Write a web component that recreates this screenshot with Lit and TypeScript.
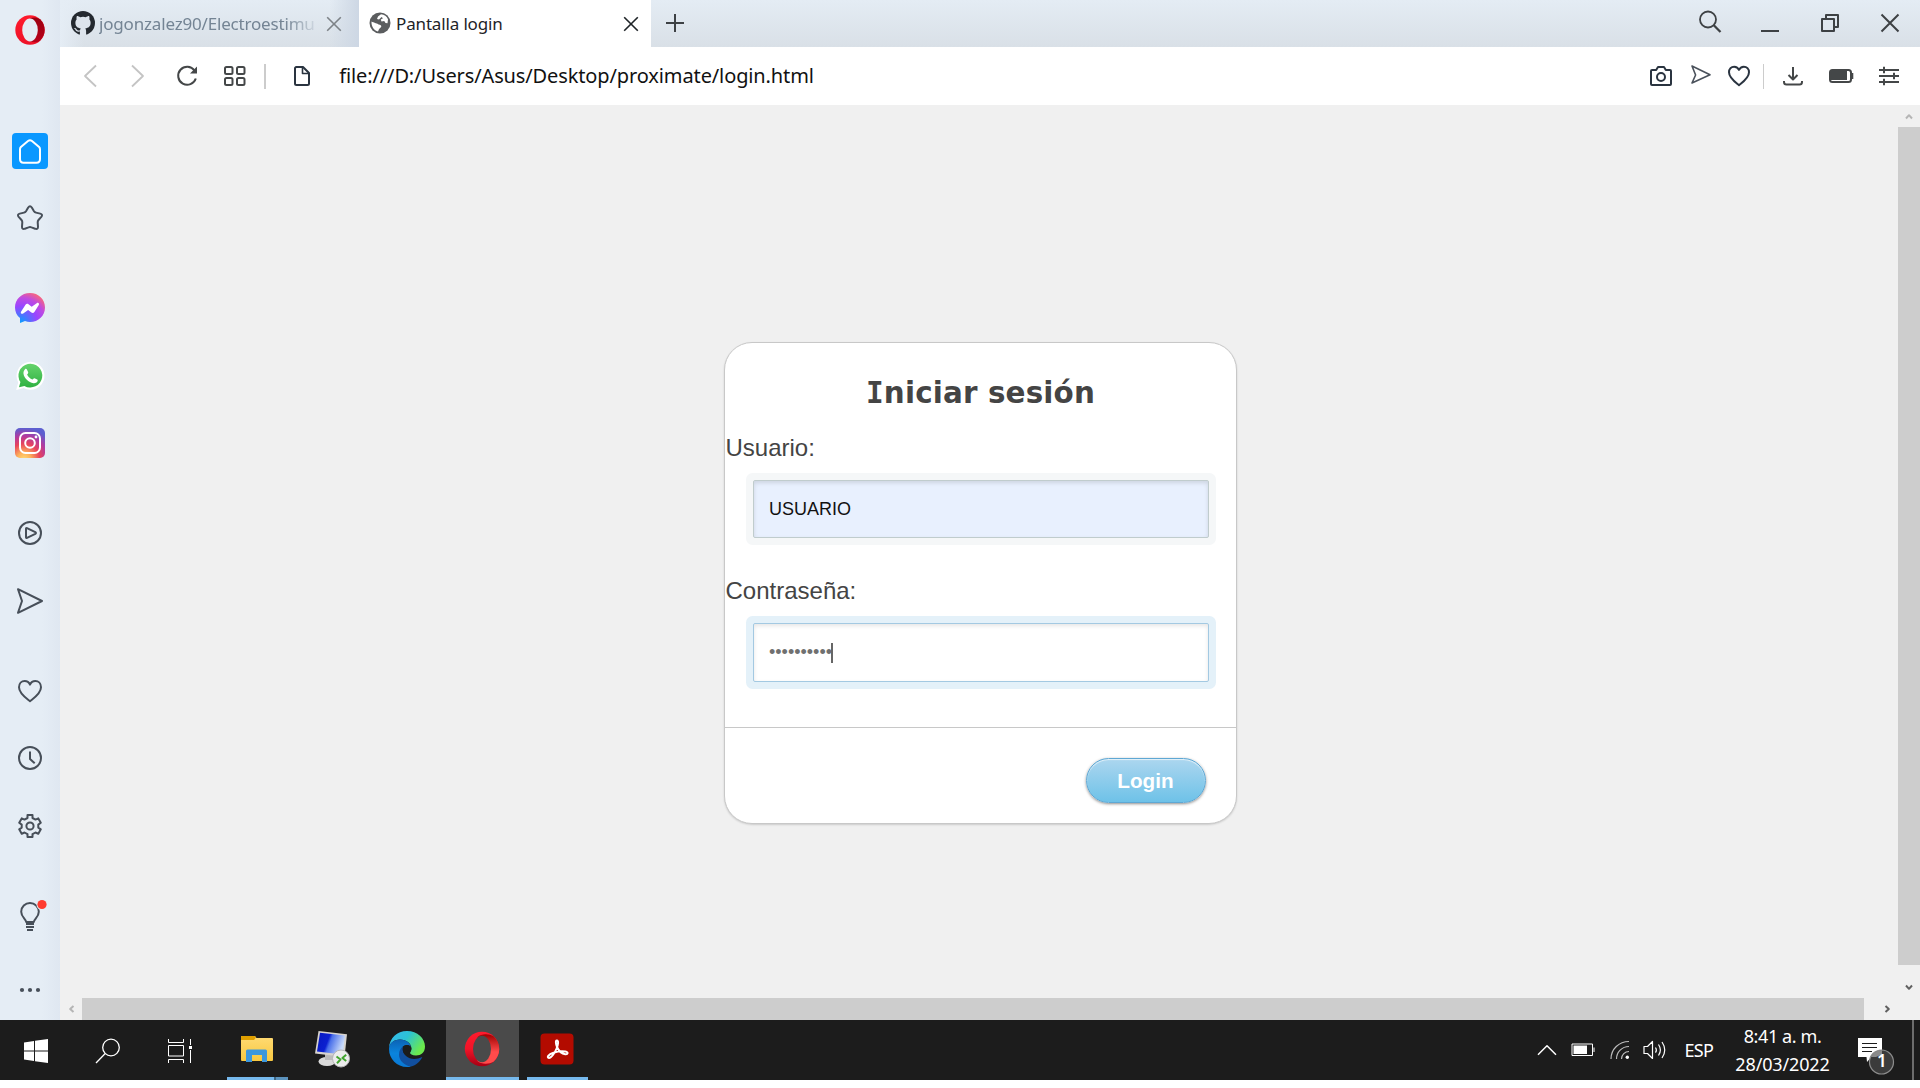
import { LitElement, html, svg, css, nothing } from "lit";
import type { TemplateResult } from "lit";
import { customElement, property } from "lit/decorators.js";

type Glyph = { w: number; h: number; body: TemplateResult };
const g = (w: number, h: number, body: TemplateResult): Glyph => ({ w, h, body });

const heart = svg`<path d="M12 21.2C8.500 18.400 2 14 2 8.300 2 5 4.300 2.700 7.200 2.700c2.100 0 3.800 1 4.800 3.200 1-2.200 2.700-3.200 4.800-3.200C19.700 2.700 22 5 22 8.300c0 5.700-6.500 10.100-10 12.900z"/>`;
const heartBig = svg`<path d="M13 23.300C9.200 20.300 2 15.500 2 9.300 2 5.500 4.600 3 7.700 3c2.300 0 4.200 1.100 5.300 3.600C14.100 4.100 16 3 18.300 3 21.400 3 24 5.500 24 9.300c0 6.200-7.200 11-11 14z"/>`;

const glyphs: Record<string, Glyph> = {
  opera: g(30, 30, svg`
    <defs><linearGradient id="o1" x1="0" y1="0" x2="0" y2="1"><stop offset="0" stop-color="#ff1b2d"/><stop offset="1" stop-color="#ee1228"/></linearGradient>
    <linearGradient id="o2" x1="0" y1="0" x2="0" y2="1"><stop offset="0" stop-color="#9c0010"/><stop offset="1" stop-color="#b8001a"/></linearGradient></defs>
    <circle cx="15" cy="15" r="14.700" fill="url(#o1)"/>
    <path d="M15 3.600C18 1.900 22 2.500 25 4.300a14.700 14.700 0 0 1 0 21.400c-3 1.800-7 2.200-10 .600z" fill="url(#o2)"/>
    <ellipse cx="15" cy="15" rx="7.800" ry="11.400" fill="#e4ecf4"/>`),
  operaTask: g(36, 36, svg`
    <defs><linearGradient id="p1" x1="0" y1="0" x2="0" y2="1"><stop offset="0" stop-color="#ff1b2d"/><stop offset=".5" stop-color="#f01428"/><stop offset="1" stop-color="#a50014"/></linearGradient>
    <linearGradient id="p2" x1="0" y1="0" x2="0" y2="1"><stop offset="0" stop-color="#9c0000"/><stop offset=".6" stop-color="#ff4b4b"/></linearGradient></defs>
    <circle cx="18" cy="18" r="17.200" fill="url(#p1)"/>
    <path d="M13.500 6C17 2.500 25 2.300 29.500 5.200a17.200 17.200 0 0 1 0 25.600C25 33.600 17 33.500 13.500 30z" fill="url(#p2)"/>
    <ellipse cx="18" cy="18" rx="9" ry="13.200" fill="#4a4a4a"/>`),
  github: g(24, 24, svg`<circle cx="12" cy="12" r="12" fill="#24292f"/><path fill="#dde4ec" d="M8.900 24v-3.400c-3.200.6-4-.9-4.500-1.900-.3-.6-.9-1.300-1.600-1.500.9-.6 2.100 0 2.700 1 .8 1.200 1.900 1.500 3.500 1.100.1-.9.400-1.500.8-1.900-3.400-.4-5.400-1.800-5.400-5.600 0-1.500.5-2.600 1.300-3.500-.3-.9-.3-2.200.2-3.400 1.200 0 2.400.7 3.300 1.300a12 12 0 0 1 5.600 0c.9-.6 2.100-1.300 3.300-1.300.5 1.200.5 2.500.2 3.400.8.9 1.300 2 1.300 3.500 0 3.800-2 5.200-5.400 5.600.6.6.9 1.400.9 2.500V24z"/>`),
  globe: g(22, 22, svg`<circle cx="11" cy="11" r="10.500" fill="#5b5d5f"/><path fill="#fff" d="M2.500 9.500C3.500 10.500 5 10 6 11l2.500.8c1.200 1.200 3.500.7 3.800 2.200.2 1.500-1.800 2-2.300 3.300l-1 2.200C5 18.600 2.200 14.500 2.500 9.500zM9 4.500l3-2.200c3.500.3 5.800 2.200 7 5l-.5 4-2-.2-1.300-2-2.700.3-.7-1.800L14 6.200 12.500 5 10 7.500 8 7z"/>`),
  closeThin: g(16, 16, svg`<path d="M1.200 1.200l13.600 13.600M14.800 1.200L1.200 14.800"/>`),
  plus: g(18, 18, svg`<path d="M9 0v18M0 9h18"/>`),
  search: g(24, 24, svg`<circle cx="10" cy="9.500" r="8"/><path d="M15.800 15.300l6.700 6.700" stroke-width="2.300"/>`),
  minimize: g(18, 18, svg`<path d="M0 17h18"/>`),
  restore: g(18, 18, svg`<path d="M1 5h12v12H1zM5 5V1h12v12h-4"/>`),
  close: g(18, 18, svg`<path d="M.5.500l17 17M17.500.500l-17 17"/>`),
  back: g(14, 24, svg`<path d="M13 1.500L2 12l11 10.500"/>`),
  forward: g(14, 24, svg`<path d="M1 1.500L12 12 1 22.500"/>`),
  reload: g(22, 22, svg`<path d="M18.500 5.500A9 9 0 1 0 19.800 13.500"/><path d="M21 1.500v7h-7z" fill="currentColor" stroke="none"/>`),
  tiles: g(24, 22, svg`<rect x="2" y="2" width="7.500" height="7" rx="1.500"/><rect x="14" y="2" width="7.500" height="7" rx="1.500"/><rect x="2" y="13" width="7.500" height="7" rx="1.500"/><rect x="14" y="13" width="7.500" height="7" rx="1.500"/>`),
  doc: g(18, 22, svg`<path d="M3 2h7l6 6v10.500q0 1.500-1.500 1.500h-11Q2 20 2 18.500V3.500Q2 2 3.500 2z"/><path d="M9.500 2v6.500H16" stroke-width="1.600"/>`),
  camera: g(24, 22, svg`<path d="M2 6q0-1 1-1h4.200L9 2h6l1.800 3H21q1 0 1 1v13q0 1-1 1H3q-1 0-1-1z"/><circle cx="12" cy="12" r="4"/>`),
  send: g(22, 22, svg`<path d="M2 2l18 8.800L2 19l3.600-8z"/>`),
  heart: g(24, 24, heart),
  heartBig: g(26, 26, heartBig),
  download: g(22, 22, svg`<path d="M11 2v12M6.500 10l4.500 4.500 4.500-4.500M2 16v1q0 2.500 2.500 2.500h13Q20 19.500 20 17v-1"/>`),
  battery: g(26, 18, svg`<path d="M4.500 3H20.500q2.500 0 2.500 2.500v7q0 2.500-2.500 2.500h-16Q2 15 2 12.500v-7Q2 3 4.500 3z"/><path d="M3 3h16v10H3z" fill="currentColor" stroke="none"/><path d="M24.300 6v6"/>`),
  sliders: g(22, 20, svg`<path d="M1 4h20M1 10h20M1 16h20M6 .8v6.400M16 6.800v6.400M6 12.800v6.400"/>`),
  home: g(36, 36, svg`<rect width="36" height="36" rx="4" fill="#0a98ff" stroke="none"/><path d="M8 16.200q0-1.300.9-2.200L16 8q2-1.400 4 0l7.100 6q.9.900.9 2.200V26q0 3.800-3.500 3.800h-13Q8 29.800 8 26z" stroke="#fff"/>`),
  star: g(30, 28, svg`<path d="M13.200 3.500q1.800-2.500 3.600 0l2.200 3.700q.7 1.100 2 1.400l4.200 1q3 .8 1.100 3.200L23.500 16q-.9 1-.8 2.400l.3 4.300q0 3.200-2.900 2l-3.600-1.300q-1.500-.6-3 0l-3.600 1.300q-2.900 1.200-2.900-2l.3-4.300q.1-1.400-.8-2.400l-2.800-3.200Q1.800 10.400 4.800 9.600l4.200-1q1.300-.3 2-1.400z"/>`),
  messenger: g(30, 30, svg`<defs><radialGradient id="ms" cx=".2" cy=".98" r="1.100"><stop offset="0" stop-color="#0a9cff"/><stop offset=".5" stop-color="#9a45ff"/><stop offset=".75" stop-color="#c04be0"/><stop offset="1" stop-color="#ff6b70"/></radialGradient></defs><path d="M15 0C6.500 0 0 6.200 0 14.500c0 4.300 1.800 8 5 10.600V30l5-2c1.600.7 3.300 1 5 1 8.500 0 15-6.200 15-14.500S23.500 0 15 0z" fill="url(#ms)"/><path fill="#fff" d="M6 18.800l4.500-7c.7-1.100 2-1.300 3-.5l3.200 2.500 5-3.600c1.300-1 3 .3 2.100 1.700l-4.400 7c-.7 1.100-2 1.300-3 .5l-3.300-2.500-4.900 3.600c-1.400 1-3-.3-2.200-1.700z"/>`),
  whatsapp: g(30, 30, svg`<defs><linearGradient id="wa" x1="0" y1="0" x2="0" y2="1"><stop offset="0" stop-color="#65d36b"/><stop offset="1" stop-color="#30b143"/></linearGradient></defs><path d="M1.200 29l2-7.500A14 14 0 1 1 8.600 27z" fill="#fff"/><path d="M4 26.200l1.400-5.100a11.900 11.900 0 1 1 4 3.800z" fill="url(#wa)"/><path d="M10 8.200c.6-.6 1.500-.5 1.900.2l1.300 2.900c.2.700-.4 1.600-1.100 2.200 1.200 2.400 2.900 4 5.300 5.100.8-.6 1.300-1.700 2.100-1.400l2.700 1.400c.7.4.6 1.100.2 1.900-.7 1.300-2.500 1.900-3.900 1.700-5.100-.8-9.300-5.100-10-9.500-.2-1.900.4-3.400 1.500-4.500z" fill="#fff"/>`),
  instagram: g(30, 30, svg`<defs><radialGradient id="ig" cx=".3" cy="1.050" r="1.050"><stop offset="0" stop-color="#ffdc72"/><stop offset=".22" stop-color="#fdb05a"/><stop offset=".5" stop-color="#e8445b"/><stop offset=".75" stop-color="#b23aa0"/><stop offset="1" stop-color="#5c5fd0"/></radialGradient></defs><rect width="30" height="30" rx="5" fill="url(#ig)" stroke="none"/><rect x="5" y="5" width="20" height="20" rx="5.500" stroke="#fff"/><circle cx="15" cy="15" r="4.800" stroke="#fff"/><circle cx="21" cy="9" r="1.400" fill="#fff" stroke="none"/>`),
  player: g(26, 26, svg`<circle cx="13" cy="13" r="11"/><path d="M9 8.800q0-1 1-.6l8.300 4q1.300.8 0 1.600L10 17.800q-1 .4-1-.6z"/>`),
  sendBig: g(28, 28, svg`<path d="M2 2.200L26 14 2 25.800 6 14z"/>`),
  clock: g(26, 26, svg`<circle cx="13" cy="13" r="11"/><path d="M13 6.500V14l4.700 4.300"/>`),
  gear: g(26, 26, svg`<path d="M10.500 2h5v3l3 1.600 2.800-1.200 2.500 4.300-2.500 1.900v3l2.500 1.700-2.500 4.500-2.800-1.300-3 1.700v2.900h-5v-2.900l-3-1.700-2.800 1.300-2.500-4.500 2.500-1.700v-3L2.200 9.700l2.500-4.300 2.800 1.200 3-1.600z"/><circle cx="13" cy="13" r="3.600"/>`),
  bulb: g(34, 32, svg`<path d="M13.200 22c0-3-5-4.600-5-10.300A8.800 8.800 0 0 1 17 3a8.800 8.800 0 0 1 8.800 8.700c0 5.700-5 7.300-5 10.300z"/><path d="M13 24h8M13 27h8M14 30h6"/><circle cx="29" cy="4.500" r="5.500" fill="#e4ecf4" stroke="none"/><circle cx="29" cy="4.500" r="4.600" fill="#ff3b2f" stroke="none"/>`),
  more: g(22, 6, svg`<circle cx="3" cy="3" r="2.100" fill="currentColor"/><circle cx="11" cy="3" r="2.100" fill="currentColor"/><circle cx="19" cy="3" r="2.100" fill="currentColor"/>`),
  windows: g(24, 24, svg`<path fill="#fff" d="M0 3.400L10 2v9.500H0zM11 1.800L24 0v11.500H11zM0 12.500h10V22L0 20.600zM11 12.500h13V24l-13-1.800z"/>`),
  find: g(26, 26, svg`<circle cx="16" cy="9.500" r="8.300"/><path d="M10.200 15.500L1 25"/>`),
  taskview: g(26, 24, svg`<path d="M1.500 0v3.500h15V0M1.500 24v-3.500h15V24M1.500 6.500h15v10.500h-15zM23.500 0v6M23.500 11v13"/><rect x="22" y="7" width="3" height="3" fill="#fff" stroke="none"/>`),
  explorer: g(34, 28, svg`<defs><linearGradient id="fo" x1="0" y1="0" x2="0" y2="1"><stop offset="0" stop-color="#ffdb74"/><stop offset="1" stop-color="#f8c840"/></linearGradient></defs><path d="M1 2q0-1 1-1h13l1.500 2H32q1 0 1 1v21q0 1-1 1H2q-1 0-1-1z" fill="url(#fo)"/><path d="M1 2q0-1 1-1h12.500l1.500 1.500L14 5H1z" fill="#e0a000"/><path d="M6 27V16q0-1.500 1.500-1.500h18Q27 14.500 27 16v11h-5v-7H12v7z" fill="#3c97dd"/>`),
  remote: g(38, 38, svg`<defs><linearGradient id="sc" x1="0" y1="0" x2="1" y2=".3"><stop offset="0" stop-color="#0718c0"/><stop offset=".45" stop-color="#0b20d0"/><stop offset=".55" stop-color="#4a70ea"/><stop offset="1" stop-color="#c8dafa"/></linearGradient></defs><g stroke="none"><ellipse cx="14" cy="31.500" rx="8.500" ry="4.500" fill="#d9d9d9"/><path d="M12 22h8v8h-8z" fill="#bbb"/><path d="M5.500 1L34 4.200 31.500 27 2 23.500z" fill="#d7d3ce"/><path d="M7 2.700l25 2.900L29.700 24.500 4 21.500z" fill="url(#sc)"/></g><circle cx="28" cy="28.500" r="8.500" fill="#ececec" stroke="#b5b5b5"/><path d="M23.500 26.500l4 3-3.500 3.700M33.200 24.800l-3.800 3.200 3.800 3" stroke="#43a52f" stroke-width="2"/>`),
  edge: g(36, 36, svg`<defs><linearGradient id="e1" x1="0" y1="0" x2="1" y2=".5"><stop offset="0" stop-color="#35b8f2"/><stop offset=".5" stop-color="#2cc3d4"/><stop offset="1" stop-color="#6bea4c"/></linearGradient><linearGradient id="e2" x1="0" y1="0" x2="0" y2="1"><stop offset="0" stop-color="#0c62b4"/><stop offset=".5" stop-color="#0a84dd"/><stop offset="1" stop-color="#0a78d4"/></linearGradient></defs><path d="M0 17C.5 7 8 0 18 0c10.500 0 18 7.500 18 15.500 0 6-4 9-9 9-4 0-6-1.400-6-2.700 0-1.200 1.400-1.600 1.400-4.300C22.400 12 17 8.500 11 8.500 5 8.500 1 12 0 17z" fill="url(#e1)"/><path d="M0 18C0 12 5 8.500 11 8.500c6.400 0 11 4 11 8.200-.7-2.200-2.700-3-4.700-2.700C13 14.600 11 19 11.600 23.500c.8 6 4.800 10.400 10.400 11.900-1.200.5-2.600.6-4 .6C8 36 0 28 0 18z" fill="url(#e2)"/><path d="M14.500 15.300C13 18 13.700 22 17 25c4 3.500 10 4 16.300 1-2.100 4.500-6.300 8.600-11.300 9.400C15 34.500 10 29.500 10 23.500c0-3.800 1.800-6.700 4.500-8.200z" fill="#114f9f"/><path d="M14.500 15.300C13.300 17.500 13.500 20.500 15.500 23.300c2-.1 4.500-.5 5.800-1-.5-1.500 1.100-1.900 1.100-4.800 0-2.500-2.600-3.900-5.100-3.500-1.200.2-2.100.700-2.800 1.300z" fill="#1c1c1c"/>`),
  acrobat: g(34, 32, svg`<rect x=".5" y=".5" width="33" height="31" rx="4" fill="#b30b00" stroke="none"/><path d="M16.800 7.500c2.200 0 1.200 4.500-.2 8C15 19.500 11.500 25 9 25c-2.500-.3-1-3.600 4.500-5.300 3.500-1.100 8.500-1.700 11.800-1.200 3.500.8 2.500 3.200-.1 2.800-3.500-.5-6.700-4-8.200-7.300-1.100-2.800-1.700-6.500-.2-6.500z" stroke="#fff" stroke-width="2"/>`),
  chevronUp: g(20, 12, svg`<path d="M1 10.700l9-9 9 9"/>`),
  power: g(24, 14, svg`<path d="M1 1h20.500v11.500H1zM23 4.500v4.500"/><path d="M2.500 2.500H16v8.500H2.500z" fill="#fff" stroke="none"/>`),
  wifi: g(20, 20, svg`<path d="M1 19C1 9 9 1.500 19 1.500M6.500 19C6.500 12 12 6.500 19 6.500M11.500 19c0-4.500 3.500-7.500 7.500-7.500" stroke="#bdbdbd"/><circle cx="17.300" cy="17.300" r="1.700" fill="#fff" stroke="none"/>`),
  volume: g(24, 20, svg`<path d="M1 6.500h3.500L9.500 1.500v17l-5-5H1zM12.500 7.500q1.800 2.500 0 5.200M15.500 4.500q3.800 5.500 0 11M19 2q5.500 8 0 16"/>`),
  notice: g(38, 40, svg`<path d="M1 1h24v19H14.500L10 25l-.5-5H1z" fill="#fff" stroke="none"/><path d="M5 6.500h15M5 10.500h15M5 14.500h10" stroke="#1c1c1c"/><circle cx="24.500" cy="25" r="12" fill="#3b3b3b" stroke="#8d8d8d"/><path d="M13.800 20L15 18.500q3.500-5.500 10-5.500v4.500L19 20z" fill="#8a8a8a" stroke="none"/>`),
  arrowUp: g(8, 7, svg`<path d="M1 5.500l3-3.300 3 3.300"/>`),
  arrowDown: g(8, 7, svg`<path d="M1 1.500l3 3.300 3-3.300"/>`),
  arrowLeft: g(7, 8, svg`<path d="M5.500 1L2.200 4l3.300 3"/>`),
  arrowRight: g(7, 8, svg`<path d="M1.500 1l3.300 3-3.300 3"/>`),
};

const filled = new Set(["opera", "operaTask", "github", "globe", "messenger", "whatsapp", "more", "windows", "explorer", "edge"]);

@customElement("ui-icon")
export class UiIcon extends LitElement {
  @property() name = "";
  @property({ type: Number }) weight = 2;
  static styles = css`
    :host { display: block; flex: none; }
    svg { display: block; overflow: visible; }
  `;
  render() {
    const i = glyphs[this.name];
    if (!i) return nothing;
    return html`<svg width=${i.w} height=${i.h} viewBox="0 0 ${i.w} ${i.h}" fill="none"
      stroke=${filled.has(this.name) ? "none" : "currentColor"}
      stroke-width=${this.weight} stroke-linejoin="round">${i.body}</svg>`;
  }
}

@customElement("side-bar")
export class SideBar extends LitElement {
  static styles = css`
    :host { display: flex; flex-direction: column; align-items: center; box-sizing: border-box; width: 60px; padding-top: 15px; background: linear-gradient(90deg, #e5edf5 70%, #dfe7f1); color: #474f59; }
    .items { padding-top: 72px; }
    .group { display: flex; flex-direction: column; margin-bottom: 22.500px; }
    .item { height: 67.500px; display: flex; align-items: center; justify-content: center; }
    .more { padding-top: 14.750px; }
  `;
  render() {
    const groups = [["home", "star"], ["messenger", "whatsapp", "instagram"], ["player", "sendBig"], ["heartBig", "clock", "gear"], ["bulb"]];
    return html`<ui-icon name="opera"></ui-icon>
      <div class="items">${groups.map((x) => html`<div class="group">${x.map((n) => html`<div class="item"><ui-icon name=${n}></ui-icon></div>`)}</div>`)}</div>
      <ui-icon class="more" name="more"></ui-icon>`;
  }
}

@customElement("tab-strip")
export class TabStrip extends LitElement {
  static styles = css`
    :host { display: flex; height: 47px; background: linear-gradient(#e4ecf4, #d9e0e7); font-family: "Noto Sans", sans-serif; font-size: 17px; color: #3d4144; }
    .tab { display: flex; align-items: center; box-sizing: border-box; white-space: nowrap; }
    .idle { width: 299px; padding: 0 17px 1px 11px; background: linear-gradient(90deg, #e5edf5, transparent 24px, transparent 270px, #cdd7e4); color: #748494; }
    .idle .label { margin-left: 4px; letter-spacing: -0.180px; -webkit-mask-image: linear-gradient(90deg, #000 86%, rgba(0, 0, 0, 0.150)); mask-image: linear-gradient(90deg, #000 86%, rgba(0, 0, 0, 0.150)); }
    .idle .shut { margin-left: auto; color: #7d8287; }
    .active { width: 292px; padding: 0 12px 1px 10px; background: #fff; color: #1e2327; }
    .active .label { flex: 1; margin-left: 5px; letter-spacing: -0.150px; }
    .shut { margin-top: 1px; }
    .plus { margin: 14px 0 0 15px; }
    .controls { margin-left: auto; display: flex; padding: 14px 21px 0 0; }
    .find { margin: -4px 39px 0 0; }
    .controls ui-icon + ui-icon + ui-icon { margin-left: 42px; }
  `;
  render() {
    return html`
      <div class="tab idle"><ui-icon name="github"></ui-icon><span class="label">jogonzalez90/Electroestimu</span><ui-icon class="shut" name="closeThin" weight="1.600"></ui-icon></div>
      <div class="tab active"><ui-icon name="globe"></ui-icon><span class="label">Pantalla login</span><ui-icon class="shut" name="closeThin" weight="1.600"></ui-icon></div>
      <ui-icon class="plus" name="plus"></ui-icon>
      <div class="controls"><ui-icon class="find" name="search" weight="1.800"></ui-icon><ui-icon name="minimize"></ui-icon><ui-icon name="restore"></ui-icon><ui-icon name="close"></ui-icon></div>`;
  }
}

@customElement("address-bar")
export class AddressBar extends LitElement {
  static styles = css`
    :host { display: flex; align-items: center; box-sizing: border-box; height: 58px; padding: 0 20px 0 6px; background: #fff; color: #444748; }
    .cell { width: 48.300px; display: flex; justify-content: center; }
    .dim { color: #c4c4c4; }
    .sep { width: 1px; height: 25px; background: #ccc; }
    .wide { width: 2px; margin-left: 5px; }
    .doc { margin: 0 28px 0 27px; color: #2a3440; }
    .url { flex: 1; margin-top: -2px; font: 20px "Noto Sans", sans-serif; letter-spacing: -0.120px; color: #111; }
    .dark { display: flex; align-items: center; color: #2a3440; }
    .dark .send { margin: -2px 15px 0 17px; color: #4a515b; }
    .dark .heart { margin-right: 12px; }
    .tools { display: flex; gap: 24px; align-items: center; padding-left: 18px; }
  `;
  render() {
    return html`
      <div class="cell dim"><ui-icon name="back" weight="1.800"></ui-icon></div>
      <div class="cell dim"><ui-icon name="forward" weight="1.800"></ui-icon></div>
      <div class="cell"><ui-icon name="reload"></ui-icon></div>
      <div class="cell"><ui-icon name="tiles"></ui-icon></div>
      <div class="sep wide"></div>
      <ui-icon class="doc" name="doc"></ui-icon>
      <span class="url">file:///D:/Users/Asus/Desktop/proximate/login.html</span>
      <div class="dark"><ui-icon name="camera"></ui-icon><ui-icon class="send" name="send" weight="1.600"></ui-icon><ui-icon class="heart" name="heart"></ui-icon></div>
      <div class="sep"></div>
      <div class="tools"><ui-icon name="download"></ui-icon><ui-icon name="battery"></ui-icon><ui-icon name="sliders"></ui-icon></div>`;
  }
}

@customElement("login-card")
export class LoginCard extends LitElement {
  static styles = css`
    :host { display: block; box-sizing: border-box; width: 513px; height: 482px; border: 1px solid #c8c8c8; border-radius: 28px; background: #fff; box-shadow: 0 1px 2px rgba(0, 0, 0, 0.150); font-family: "Liberation Sans", Arial, sans-serif; color: #444; }
    .title { margin: 0; padding-top: 32px; height: 57px; line-height: 36px; text-align: center; font-family: "DejaVu Sans", Verdana, sans-serif; font-size: 29.400px; font-weight: 700; letter-spacing: 0.150px; }
    .initial { font-family: "DejaVu Sans Mono", monospace; }
    .label { height: 28px; line-height: 28px; margin-top: 2px; padding-left: 0.500px; font-size: 24px; }
    .field { display: flex; align-items: center; box-sizing: border-box; width: 456px; height: 58px; margin: 18px 0 0 28px; padding-left: 15px; border: 1px solid #c0cccd; border-radius: 2px; background: #e8f0fe; box-shadow: inset 0 2px 4px rgba(0, 0, 0, 0.120), 0 0 0 7px #f5f7f8; font-size: 18px; color: #111; }
    .first { margin-bottom: 39px; }
    .focus { height: 59px; background: #fff; border-color: #a3c9e2; box-shadow: inset 0 2px 4px rgba(0, 0, 0, 0.100), 0 0 0 7px #e4f1f9; color: #707070; }
    .caret { width: 2px; height: 20px; background: #666; margin-left: -1px; }
    .footer { display: flex; justify-content: flex-end; margin-top: 45px; padding: 30px 30px 0 0; border-top: 1px solid #c8c8c8; }
    .login { box-sizing: border-box; width: 120px; height: 45px; border: 1px solid #5fa8d4; border-radius: 23px; background: linear-gradient(#acd6ef, #6ec2e8); box-shadow: 0 1px 3px rgba(0, 0, 0, 0.450), inset 0 1px 1px rgba(255, 255, 255, 0.700); color: #fff; font: 700 20.700px "Liberation Sans", Arial, sans-serif; padding: 0 1px 0 0; }
  `;
  render() {
    return html`
      <h1 class="title"><span class="initial">I</span>niciar sesión</h1>
      <div class="label">Usuario:</div>
      <div class="field first">USUARIO</div>
      <div class="label">Contraseña:</div>
      <div class="field focus">••••••••••<span class="caret"></span></div>
      <div class="footer"><button class="login">Login</button></div>`;
  }
}

@customElement("task-bar")
export class TaskBar extends LitElement {
  static styles = css`
    :host { display: flex; height: 60px; background: #1c1c1c; color: #fff; font-family: "Noto Sans", sans-serif; font-size: 18px; }
    .sys { width: 72px; display: flex; align-items: center; justify-content: center; padding-top: 2px; box-sizing: border-box; }
    .apps { display: flex; gap: 2px; margin-left: 5px; }
    .app { width: 73px; display: grid; grid-template-rows: 1fr 3px; justify-items: center; align-items: center; }
    .app ui-icon { margin-right: 2px; }
    .current { background: #4a4a4a; }
    .line { width: 61px; height: 3px; background: #76b9ed; }
    .split { background: linear-gradient(90deg, #76b9ed 47px, #3f6683 47px, #3f6683 49px, #5c93bd 49px); }
    .current .line { width: 73px; }
    .tray { display: flex; align-items: center; margin-left: auto; }
    .power { margin-left: 14px; }
    .wifi { margin-left: 15px; }
    .volume { margin-left: 13px; }
    .lang { width: 30px; margin-left: 18px; letter-spacing: -0.700px; }
    .clock { width: 110px; margin-left: 13px; text-align: center; line-height: 28px; letter-spacing: -0.150px; }
    .time { letter-spacing: -0.400px; }
    .notice { display: grid; margin: 13px 17px 0 19.500px; }
    .notice > * { grid-area: 1 / 1; }
    .count { padding: 10px 0 0 20px; font-size: 17px; line-height: 28px; font-weight: 600; }
    .peek { width: 6px; height: 60px; border-left: 2px solid #6d6d6d; }
  `;
  private app(name: string, line: string, current = false) {
    return html`<div class="app ${current ? "current" : ""}"><ui-icon name=${name} weight="1"></ui-icon>${line ? html`<div class="line ${line}"></div>` : nothing}</div>`;
  }
  render() {
    return html`
      <div class="sys"><ui-icon name="windows"></ui-icon></div>
      <div class="sys"><ui-icon name="find" weight="1.300"></ui-icon></div>
      <div class="sys"><ui-icon name="taskview" weight="1"></ui-icon></div>
      <div class="apps">${this.app("explorer", "split")}${this.app("remote", "")}${this.app("edge", "")}${this.app("operaTask", "full", true)}${this.app("acrobat", "full")}</div>
      <div class="tray">
        <ui-icon name="chevronUp" weight="1.500"></ui-icon>
        <ui-icon class="power" name="power" weight="1"></ui-icon>
        <ui-icon class="wifi" name="wifi" weight="1.200"></ui-icon>
        <ui-icon class="volume" name="volume" weight="1.200"></ui-icon>
        <span class="lang">ESP</span>
        <div class="clock"><div class="time">8:41 a. m.</div><div>28/03/2022</div></div>
        <div class="notice"><ui-icon name="notice" weight="1.200"></ui-icon><span class="count">1</span></div>
        <div class="peek"></div>
      </div>`;
  }
}

@customElement("app-root")
export class AppRoot extends LitElement {
  static styles = css`
    :host { display: flex; flex-direction: column; width: 1920px; height: 1088px; background: #fff; overflow: hidden; }
    .browser { display: flex; height: 1020px; }
    .main { flex: 1; display: flex; flex-direction: column; }
    .view { flex: 1; display: grid; grid-template: 1fr 22px / 1fr 22px; background: #f0f0f0; color: #606060; }
    .page { padding: 237px 0 0 664px; }
    .vbar { display: flex; flex-direction: column; }
    .hbar { display: flex; }
    .end { width: 22px; height: 22px; display: flex; align-items: center; justify-content: center; flex: none; }
    .off { color: #b5b5b5; }
    .vthumb { height: 838px; background: #cdcdcd; }
    .hthumb { width: 1782px; background: #cdcdcd; }
    .vbar .last { margin-top: auto; }
    .hbar .last { margin-left: auto; }
  `;
  render() {
    return html`
      <div class="browser">
        <side-bar></side-bar>
        <div class="main">
          <tab-strip></tab-strip>
          <address-bar></address-bar>
          <div class="view">
            <div class="page"><login-card></login-card></div>
            <div class="vbar"><div class="end off"><ui-icon name="arrowUp"></ui-icon></div><div class="vthumb"></div><div class="end last"><ui-icon name="arrowDown"></ui-icon></div></div>
            <div class="hbar"><div class="end off"><ui-icon name="arrowLeft"></ui-icon></div><div class="hthumb"></div><div class="end last"><ui-icon name="arrowRight"></ui-icon></div></div>
          </div>
        </div>
      </div>
      <task-bar></task-bar>`;
  }
}
